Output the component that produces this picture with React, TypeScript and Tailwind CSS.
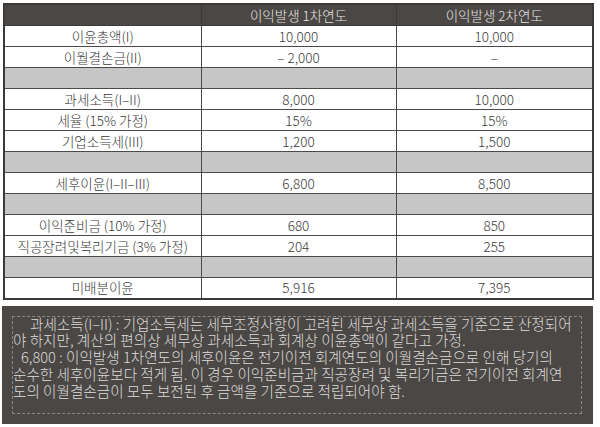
import React from 'react';

type Row = { label?: string; a?: string; b?: string; gray?: boolean };

const rows: Row[] = [
  { label: '이윤총액(I)', a: '10,000', b: '10,000' },
  { label: '이월결손금(II)', a: '– 2,000', b: '–' },
  { gray: true },
  { label: '과세소득(I–II)', a: '8,000', b: '10,000' },
  { label: '세율 (15% 가정)', a: '15%', b: '15%' },
  { label: '기업소득세(III)', a: '1,200', b: '1,500' },
  { gray: true },
  { label: '세후이윤(I–II–III)', a: '6,800', b: '8,500' },
  { gray: true },
  { label: '이익준비금 (10% 가정)', a: '680', b: '850' },
  { label: '직공장려및복리기금 (3% 가정)', a: '204', b: '255' },
  { gray: true },
  { label: '미배분이윤', a: '5,916', b: '7,395' },
];

const font = "font-['Noto_Sans_CJK_KR','Noto_Sans',sans-serif]";

export default function App() {
  return (
    <div className={`w-[600px] h-[427px] bg-white pt-[3px] pl-[3px] ${font}`}>
      <table className="w-[589px] table-fixed border-collapse border-2 border-[#3c3a39] text-[13.5px] font-light text-[#3a3a3a]">
        <colgroup>
          <col className="w-[197px]" />
          <col className="w-[195px]" />
          <col className="w-[197px]" />
        </colgroup>
        <thead>
          <tr className="h-[21px] bg-[#4b4745] text-[#e6e4e2]">
            <th className="border border-[#3c3a39] font-light" />
            <th className="border border-[#3c3a39] font-light">이익발생 1차연도</th>
            <th className="border border-[#3c3a39] font-light">이익발생 2차연도</th>
          </tr>
        </thead>
        <tbody>
          {rows.map((r, i) => (
            <tr key={i} className={r.gray ? 'h-[21px] bg-[#c6c6c6]' : 'h-[21px] bg-white'}>
              <td className="border border-[#4a4a4a] text-center leading-none p-0 whitespace-nowrap">{r.label}</td>
              <td className="border border-[#4a4a4a] text-center leading-none p-0">{r.a}</td>
              <td className="border border-[#4a4a4a] text-center leading-none p-0">{r.b}</td>
            </tr>
          ))}
        </tbody>
      </table>

      <div className="mt-[6px] ml-[-1px] w-[591px] h-[118px] bg-[#4a4745] pt-[12px] pl-[10px] pr-[11px] pb-[8px]">
        <div className="h-full border border-dashed border-[#8a8785] text-[14.6px] leading-[16.7px] text-[#dedcda] font-light whitespace-nowrap -mt-[2px]">
          <p className="pl-[17px] -mt-[1px]">과세소득(I–II) : 기업소득세는 세무조정사항이 고려된 세무상 과세소득을 기준으로 산정되어</p>
          <p>야 하지만, 계산의 편의상 세무상 과세소득과 회계상 이윤총액이 같다고 가정.</p>
          <p className="pl-[8px]">6,800 : 이익발생 1차연도의 세후이윤은 전기이전 회계연도의 이월결손금으로 인해 당기의</p>
          <p>순수한 세후이윤보다 적게 됨. 이 경우 이익준비금과 직공장려 및 복리기금은 전기이전 회계연</p>
          <p>도의 이월결손금이 모두 보전된 후 금액을 기준으로 적립되어야 함.</p>
        </div>
      </div>
    </div>
  );
}
